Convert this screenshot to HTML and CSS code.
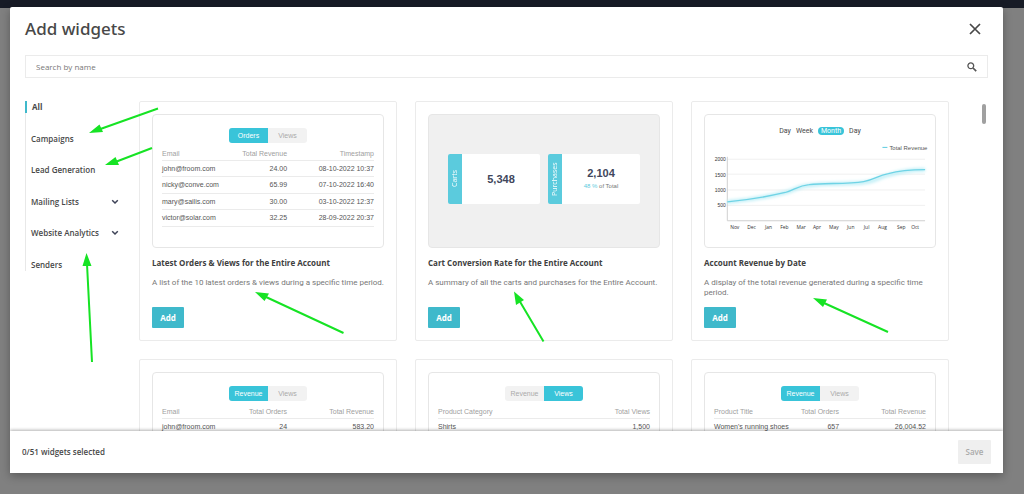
FILE: index.html
```html
<!DOCTYPE html>
<html lang="en">
<head>
<meta charset="utf-8">
<meta name="viewport" content="width=device-width, initial-scale=1">
<title>Add widgets</title>
<link rel="stylesheet" href="styles.css">
</head>
<body class="page">
<div class="dialog" role="dialog" aria-labelledby="dialog-title">
  <header class="dialog-header">
    <h1 class="dialog-title" id="dialog-title">Add widgets</h1>
    <button class="close" type="button" aria-label="Close">
      <svg width="12" height="12" viewBox="0 0 12 12"><path d="M1 1L11 11M11 1L1 11" fill="none" stroke="#484848" stroke-width="1.7"/></svg>
    </button>
  </header>
  <label class="search">
    <input class="search-input" type="text" placeholder="Search by name" aria-label="Search by name">
    <svg width="10" height="10" viewBox="0 0 10 10" fill="none" stroke="#555"><circle cx="3.8" cy="3.8" r="2.9" stroke-width="1.3"/><path d="M6 6L9.2 9.2" stroke-width="1.7"/></svg>
  </label>
  <div class="content">
    <nav class="nav" aria-label="Categories">
      <a class="nav-item nav-item-active" href="#all">All</a>
      <a class="nav-item" href="#campaigns">Campaigns</a>
      <a class="nav-item" href="#lead">Lead Generation</a>
      <a class="nav-item" href="#lists">Mailing Lists <svg width="8" height="6" viewBox="0 0 8 6"><path d="M1.2 1.2L4 4L6.8 1.2" fill="none" stroke="#3d4257" stroke-width="1.5"/></svg></a>
      <a class="nav-item" href="#analytics">Website Analytics <svg width="8" height="6" viewBox="0 0 8 6"><path d="M1.2 1.2L4 4L6.8 1.2" fill="none" stroke="#3d4257" stroke-width="1.5"/></svg></a>
      <a class="nav-item" href="#senders">Senders</a>
    </nav>
    <main class="widgets">
      <article class="card">
        <div class="preview preview-table">
          <div class="toggle"><button class="toggle-option toggle-on" type="button">Orders</button><button class="toggle-option" type="button">Views</button></div>
          <table class="table">
            <thead><tr><th>Email</th><th>Total Revenue</th><th>Timestamp</th></tr></thead>
            <tbody>
              <tr><td>john@froom.com</td><td>24.00</td><td>08-10-2022 10:37</td></tr>
              <tr><td>nicky@conve.com</td><td>65.99</td><td>07-10-2022 16:40</td></tr>
              <tr><td>mary@sailis.com</td><td>30.00</td><td>03-10-2022 12:37</td></tr>
              <tr><td>victor@solar.com</td><td>32.25</td><td>28-09-2022 20:37</td></tr>
            </tbody>
          </table>
        </div>
        <h2 class="card-title">Latest Orders &amp; Views for the Entire Account</h2>
        <p class="card-text">A list of the 10 latest orders &amp; views during a specific time period.</p>
        <button class="add" type="button">Add</button>
      </article>
      <article class="card">
        <div class="preview preview-stats">
          <div class="stat"><span class="stat-label">Carts</span><div class="stat-body"><strong class="stat-value">5,348</strong></div></div>
          <div class="stat"><span class="stat-label">Purchases</span><div class="stat-body"><strong class="stat-value">2,104</strong><span class="stat-note"><span class="stat-percent">48 %</span> of Total</span></div></div>
        </div>
        <h2 class="card-title">Cart Conversion Rate for the Entire Account</h2>
        <p class="card-text">A summary of all the carts and purchases for the Entire Account.</p>
        <button class="add" type="button">Add</button>
      </article>
      <article class="card">
        <div class="preview preview-chart">
          <div class="periods"><button class="period" type="button">Day</button><button class="period" type="button">Week</button><button class="period period-on" type="button">Month</button><button class="period" type="button">Day</button></div>
          <svg class="chart" viewBox="0 0 232 104" role="img" aria-label="Total Revenue">
            <defs><filter id="glow" x="-10%" y="-50%" width="120%" height="200%"><feGaussianBlur stdDeviation="1.8"/></filter></defs>
            <path d="M179 12.5H184" stroke="#5bcbe0"/>
            <text class="chart-legend" x="186" y="15">Total Revenue</text>
            <path d="M22 24.500H222M22 39.500H222M22 55.500H222M22 71H222" stroke="#f0f0f0"/>
            <path d="M22.500 22V86.500H222" fill="none" stroke="#cfcfcf"/>
            <g class="chart-scale"><text x="21" y="26">2000</text><text x="21" y="42">1500</text><text x="21" y="58">1000</text><text x="21" y="73">500</text></g>
            <path d="M22.500 67.500C40 66 65 62 81 58C90 56 96 51 105 51C120 48 145 50 160 48C172 47 176 42 187 40C200 36 210 35 222 35" fill="none" stroke="#c4f0f7" stroke-width="4" filter="url(#glow)"/>
            <path d="M22.500 67.500C38 66 64 62 81 58C91 55 94 51 105 50C121 48 143 50 160 47C171 45 174 41 185 39C199 35 211 35 222 35" fill="none" stroke="#6fd3e5" stroke-width="1.300"/>
            <g class="chart-months"><text x="30" y="95">Nov</text><text x="47" y="95">Dec</text><text x="64" y="95">Jan</text><text x="80" y="95">Feb</text><text x="97" y="95">Mar</text><text x="113" y="95">Apr</text><text x="130" y="95">May</text><text x="147" y="95">Jun</text><text x="163" y="95">Jul</text><text x="179" y="95">Aug</text><text x="198" y="95">Sep</text><text x="212" y="95">Oct</text></g>
          </svg>
        </div>
        <h2 class="card-title">Account Revenue by Date</h2>
        <p class="card-text">A display of the total revenue generated during a specific time period.</p>
        <button class="add" type="button">Add</button>
      </article>
      <article class="card">
        <div class="preview preview-table">
          <div class="toggle"><button class="toggle-option toggle-on" type="button">Revenue</button><button class="toggle-option" type="button">Views</button></div>
          <table class="table">
            <thead><tr><th>Email</th><th>Total Orders</th><th>Total Revenue</th></tr></thead>
            <tbody><tr><td>john@froom.com</td><td>24</td><td>583.20</td></tr></tbody>
          </table>
        </div>
      </article>
      <article class="card">
        <div class="preview preview-table">
          <div class="toggle"><button class="toggle-option" type="button">Revenue</button><button class="toggle-option toggle-on" type="button">Views</button></div>
          <table class="table">
            <thead><tr><th>Product Category</th><th></th><th>Total Views</th></tr></thead>
            <tbody><tr><td>Shirts</td><td></td><td>1,500</td></tr></tbody>
          </table>
        </div>
      </article>
      <article class="card">
        <div class="preview preview-table">
          <div class="toggle"><button class="toggle-option toggle-on" type="button">Revenue</button><button class="toggle-option" type="button">Views</button></div>
          <table class="table">
            <thead><tr><th>Product Title</th><th>Total Orders</th><th>Total Revenue</th></tr></thead>
            <tbody><tr><td>Women's running shoes</td><td>657</td><td>26,004.52</td></tr></tbody>
          </table>
        </div>
      </article>
    </main>
    <span class="scroll-thumb"></span>
  </div>
  <footer class="dialog-footer">
    <span>0/51 widgets selected</span>
    <button class="save" type="button" disabled>Save</button>
  </footer>
</div>
<svg class="arrows" viewBox="0 0 1024 494" aria-hidden="true">
  <g stroke="#16e324" stroke-width="2" fill="none"><path d="M158 108.500L99 129.500M152 148L114 162.500M92 362L87 264M343.500 333L266 297M543.500 341.500L519 300M888 332L824 303"/></g>
  <g fill="#16e324"><path d="M89 133L99.500 124.500L103 132ZM105 165L115.500 157L119 165ZM86.500 253L82.500 266H91.500ZM255 292L269 293.500L264.500 301ZM514 291.500L524 300L516 305ZM813 298L827 299.500L823 307Z"/></g>
</svg>
</body>
</html>
```
FILE: styles.css
```css
* { box-sizing: border-box; }
button, input { font: inherit; color: inherit; border: 0; margin: 0; padding: 0; background: none; }
svg { display: block; }

.page {
  margin: 0;
  height: 100vh;
  padding: 7px 21px 21px 10px;
  display: flex;
  overflow: hidden;
  background: linear-gradient(#171b26 8px, #808080 8px);
  font: 8px/12px "Open Sans", "Noto Sans", sans-serif;
  color: #484848;
}
.dialog {
  flex: 1;
  min-width: 0;
  display: flex;
  flex-direction: column;
  overflow: hidden;
  background: #fff;
  border-radius: 2px 2px 0 0;
  box-shadow: 0 3px 10px rgba(0, 0, 0, 0.3);
}
.dialog-header {
  display: flex;
  justify-content: space-between;
  align-items: center;
  height: 48px;
  padding: 0 22px 4px 15px;
}
.dialog-title { margin: 0; font-size: 17px; line-height: 24px; font-weight: 500; font-family: "Noto Sans", sans-serif; }
.search {
  flex: none;
  display: flex;
  align-items: center;
  height: 23px;
  margin: 0 15px;
  padding: 0 10px;
  border: 1px solid #ebebeb;
}
.search-input { flex: 1; outline: 0; }
.search-input::placeholder { color: #777; opacity: 1; }

.content {
  flex: 1;
  min-height: 0;
  position: relative;
  display: flex;
  align-items: flex-start;
  gap: 20px;
  overflow: hidden;
  margin-top: 23px;
  padding: 0 54px 0 15px;
}
.nav {
  flex: none;
  width: 94px;
  min-height: 170px;
  display: flex;
  flex-direction: column;
  justify-content: space-between;
  box-shadow: inset 1px 0 #e8e8e8;
}
.nav-item {
  display: flex;
  align-items: center;
  justify-content: space-between;
  padding-left: 6px;
  color: #484848;
  font-weight: 600;
  text-decoration: none;
}
.nav-item-active { padding-left: 5px; border-left: 2px solid #3fb9cb; font-weight: 700; }

.widgets { flex: 1; display: grid; grid-template-columns: repeat(3, minmax(0, 1fr)); gap: 18px; }
.card { min-height: 240px; padding: 12px; border: 1px solid #ebebeb; border-radius: 2px; }
.card-title { margin: 9px 0 9px; font-size: 8px; line-height: 12px; font-weight: 700; color: #404040; }
.card-text { margin: 0 0 9px; min-height: 20px; font-family: Roboto, sans-serif; line-height: 10px; color: #777; }
.add { display: block; width: 32px; height: 21px; border-radius: 1px; background: #3fb9cb; color: #fff; font-weight: 700; }

.preview { height: 134px; border: 1px solid #e6e6e6; border-radius: 4px; }
.preview-table { padding: 13px 9px 0; font-family: "Liberation Sans", sans-serif; font-size: 7px; }
.toggle { display: grid; grid-template-columns: 1fr 1fr; width: 78px; height: 15px; margin: 0 auto 5px; border-radius: 3px; overflow: hidden; background: #f2f2f2; color: #aaa; }
.toggle-on { background: #39c4d9; color: #fff; }
.table { width: 100%; table-layout: fixed; border-collapse: collapse; }
.table th, .table td { padding: 0; border-bottom: 1px solid #ebebeb; text-align: right; white-space: nowrap; }
.table th { height: 12px; line-height: 11px; font-weight: 400; color: #a0a0a0; }
.table td { height: 16px; line-height: 15px; color: #555; }
.table tr:nth-child(even) td { height: 17px; }
.table th:first-child, .table td:first-child { width: 36%; text-align: left; }
.table th:nth-child(2) { width: 23%; }

.preview-stats { display: flex; align-items: center; gap: 8px; padding: 0 19px 4px; background: #f0f0f0; font-family: "Liberation Sans", sans-serif; }
.stat { flex: 1; display: flex; height: 50px; border-radius: 2px; overflow: hidden; background: #fff; }
.stat-label { width: 14px; line-height: 14px; font-family: "Open Sans", sans-serif; font-size: 7px; font-weight: 400; text-align: center; color: #fff; background: #5bcbdd; writing-mode: vertical-rl; rotate: 180deg; }
.stat-body { flex: 1; display: flex; flex-direction: column; align-items: center; justify-content: center; }
.stat-value { font-size: 11px; line-height: 13px; color: #41465c; }
.stat-note { font-size: 6px; color: #777; }
.stat-percent { color: #5bcbdd; }

.preview-chart { padding-top: 12px; }
.periods { display: flex; justify-content: center; gap: 5px; font-family: Roboto, sans-serif; font-size: 7px; line-height: 8px; }
.period-on { padding: 0 3px; border-radius: 4px; background: #39c4d9; color: #fff; }
.chart { width: 100%; }
.chart-legend { font: 6px "Liberation Sans", sans-serif; fill: #555; }
.chart-scale { font: 5px "Liberation Sans", sans-serif; fill: #333; text-anchor: end; }
.chart-months { font-size: 5px; fill: #333; text-anchor: middle; }

.scroll-thumb { position: absolute; top: 3px; right: 17px; width: 4px; height: 20px; border-radius: 2px; background: #a0a0a0; }

.dialog-footer {
  flex: none;
  z-index: 1;
  display: flex;
  align-items: center;
  justify-content: space-between;
  height: 42px;
  padding: 0 12px;
  background: #fff;
  box-shadow: 0 -1px 3px rgba(0, 0, 0, 0.3);
  font-weight: 600;
}
.save { width: 33px; height: 24px; border-radius: 1px; background: #efefef; color: #aaa; }
.arrows { position: absolute; top: 0; left: 0; width: 100%; z-index: 2; pointer-events: none; }
```
